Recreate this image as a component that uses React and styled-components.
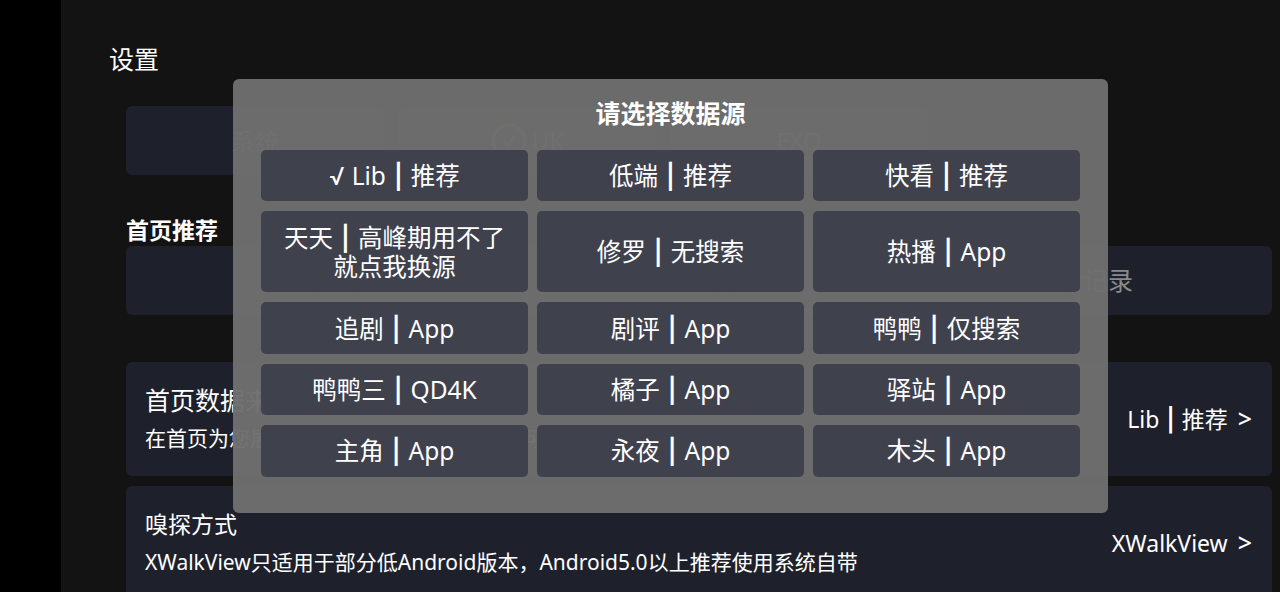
import React from 'react'
import styled, { createGlobalStyle } from 'styled-components'
import { CircleCheck } from 'lucide-react'

const sources = [
    { name: 'Lib', tag: '推荐', active: true },
    { name: '低端', tag: '推荐' },
    { name: '快看', tag: '推荐' },
    { name: '天天', tag: '高峰期用不了就点我换源' },
    { name: '修罗', tag: '无搜索' },
    { name: '热播', tag: 'App' },
    { name: '追剧', tag: 'App' },
    { name: '剧评', tag: 'App' },
    { name: '鸭鸭', tag: '仅搜索' },
    { name: '鸭鸭三', tag: 'QD4K' },
    { name: '橘子', tag: 'App' },
    { name: '驿站', tag: 'App' },
    { name: '主角', tag: 'App' },
    { name: '永夜', tag: 'App' },
    { name: '木头', tag: 'App' },
]

export default function App() {
    return (
        <Screen>
            <GlobalStyle />
            <SideStrip />
            <Main>
                <PageTitle>设置</PageTitle>
                <Tabs>
                    <Tab>系统</Tab>
                    <Tab><CircleCheck size={38} strokeWidth={2} color="#8f7a3a" />UK</Tab>
                    <Tab>EXO</Tab>
                </Tabs>
                <SectionTitle>首页推荐</SectionTitle>
                <Segments>
                    <Segment>豆瓣热播</Segment>
                    <Segment>站点推荐</Segment>
                    <Segment>观看记录</Segment>
                </Segments>
                <SettingRow $top={47}>
                    <SettingText>
                        <SettingName $size={25}>首页数据来源</SettingName>
                        <SettingHint>在首页为您展示一个数据源的推荐内容，可在这里切换不同的站点来源</SettingHint>
                    </SettingText>
                    <SettingValue>Lib<Bar $gap={7}>|</Bar>推荐<Chevron>&gt;</Chevron></SettingValue>
                </SettingRow>
                <SettingRow $top={10}>
                    <SettingText>
                        <SettingName $size={23}>嗅探方式</SettingName>
                        <SettingHint>XWalkView只适用于部分低Android版本，Android5.0以上推荐使用系统自带</SettingHint>
                    </SettingText>
                    <SettingValue>XWalkView<Chevron>&gt;</Chevron></SettingValue>
                </SettingRow>
            </Main>
            <Dialog>
                <DialogTitle>请选择数据源</DialogTitle>
                <SourceGrid>
                    {sources.map(source => (
                        <SourceButton key={source.name}>
                            <span>
                                {source.active && <Tick>√ </Tick>}
                                {source.name}<Bar $gap={8}>|</Bar>{source.tag}
                            </span>
                        </SourceButton>
                    ))}
                </SourceGrid>
            </Dialog>
        </Screen>
    )
}

const GlobalStyle = createGlobalStyle`
    html, body {
        margin: 0;
        background: #000;
    }
    * {
        box-sizing: border-box;
    }
`

const Screen = styled.div`
    position: relative;
    display: flex;
    width: 1280px;
    height: 592px;
    overflow: hidden;
    font-family: "Noto Sans", "Noto Sans CJK SC", sans-serif;
    color: #fff;
`

const SideStrip = styled.div`
    width: 61px;
    flex-shrink: 0;
    background: #000;
`

const Main = styled.div`
    flex: 1;
    padding: 43px 8px 0 65px;
    background: #131313;
`

const PageTitle = styled.h1`
    margin: 0 0 0 -17px;
    font-size: 25px;
    line-height: 32px;
    font-weight: 400;
`

const Tabs = styled.div`
    display: flex;
    gap: 14px;
    margin-top: 31px;
`

const Tab = styled.div`
    display: flex;
    align-items: center;
    justify-content: center;
    gap: 4px;
    width: 258px;
    height: 69px;
    border-radius: 6px;
    background: #1e212b;
    font-size: 24px;
    color: #8a8a8a;
`

const SectionTitle = styled.h2`
    margin: 40px 0 1px;
    font-size: 23px;
    line-height: 30px;
    font-weight: 700;
`

const Segments = styled.div`
    display: grid;
    grid-template-columns: repeat(3, 1fr);
    height: 69px;
    border-radius: 6px;
    background: #1e212b;
`

const Segment = styled.div`
    display: flex;
    align-items: center;
    justify-content: center;
    padding: 0 0 3px 4px;
    font-size: 25px;
    color: #8a8a8a;
`

const SettingRow = styled.div`
    display: flex;
    align-items: center;
    justify-content: space-between;
    height: 114px;
    margin-top: ${props => props.$top}px;
    padding: 0 20px 0 19px;
    border-radius: 6px;
    background: #1e212b;
`

const SettingText = styled.div`
    display: flex;
    flex-direction: column;
    gap: 6px;
    padding-bottom: 2px;
`

const SettingName = styled.div`
    font-size: ${props => props.$size}px;
    line-height: 34px;
`

const SettingHint = styled.div`
    font-size: 21px;
    line-height: 30px;
`

const SettingValue = styled.div`
    padding-bottom: 3px;
    font-size: 23px;
    white-space: pre;
`

const Chevron = styled.span`
    margin-left: 10px;
    font-size: 25px;
    font-weight: 500;
`

const Bar = styled.span`
    margin: 0 ${props => props.$gap}px;
    font-family: Inter, sans-serif;
    font-weight: 600;
    line-height: 1;
`

const Tick = styled.span`
    font-family: Inter, sans-serif;
    line-height: 1;
`

const Dialog = styled.div`
    position: absolute;
    left: 233px;
    top: 79px;
    width: 875px;
    height: 434px;
    padding: 0 28px;
    border-radius: 6px;
    background: rgba(110, 110, 110, 0.97);
`

const DialogTitle = styled.h3`
    margin: 0;
    padding-top: 18px;
    height: 71px;
    font-size: 25px;
    line-height: 32px;
    font-weight: 700;
    text-align: center;
`

const SourceGrid = styled.div`
    display: grid;
    grid-template-columns: repeat(3, 267px);
    grid-template-rows: 51.4px 81px 51.4px 51.4px 51.4px;
    gap: 10px 9px;
`

const SourceButton = styled.div`
    display: flex;
    align-items: center;
    justify-content: center;
    padding: 0 14px;
    border-radius: 5px;
    background: #3f414d;
    font-size: 24.5px;
    line-height: 29px;
    text-align: center;
`
